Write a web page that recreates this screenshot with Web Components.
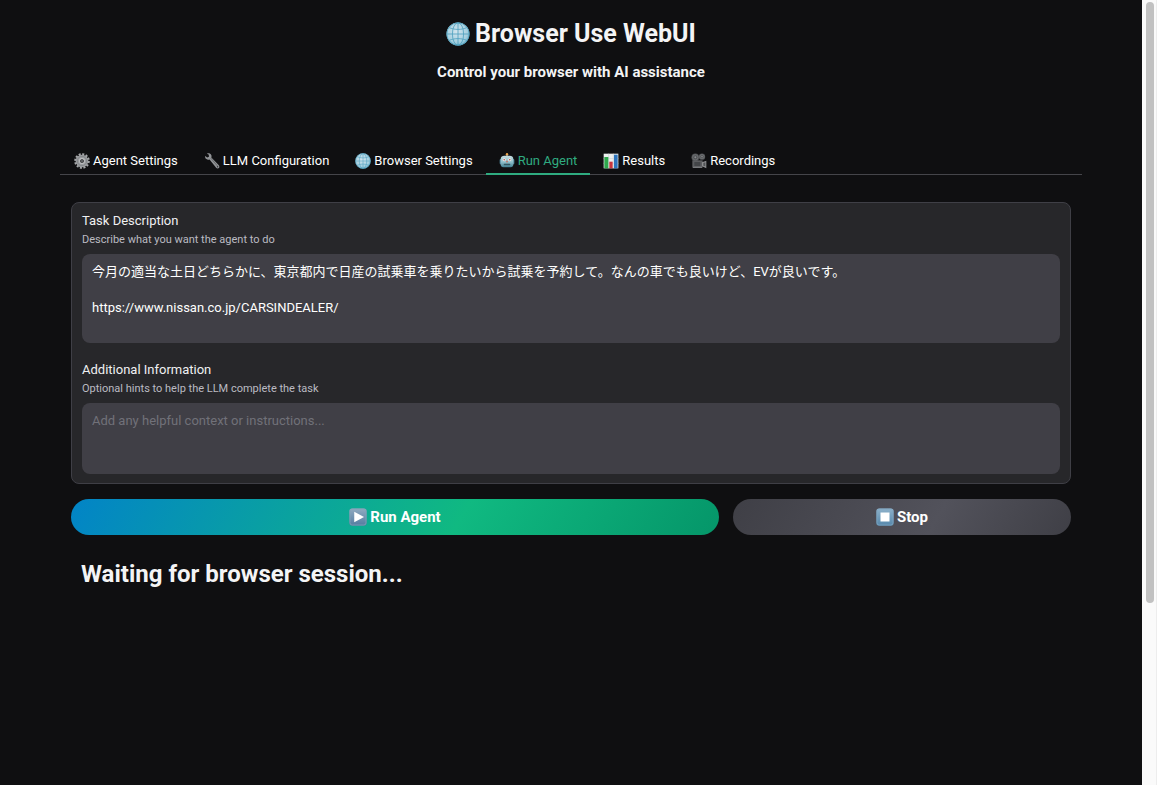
<!DOCTYPE html>
<html lang="en">
<head>
<meta charset="utf-8">
<meta name="viewport" content="width=device-width, initial-scale=1">
<title>Browser Use WebUI</title>
<style>
  html, body { margin: 0; background: #0f0f11; }
  body { font: 400 13px/18px Roboto, "Noto Sans CJK JP", sans-serif; color: #f4f4f5; }
</style>
</head>
<body>
<web-ui>
  <page-header slot="header" heading="Browser Use WebUI" tagline="Control your browser with AI assistance"></page-header>
  <tab-bar slot="tabs">
    <tab-item icon="gear">Agent Settings</tab-item>
    <tab-item icon="wrench">LLM Configuration</tab-item>
    <tab-item icon="globe">Browser Settings</tab-item>
    <tab-item icon="robot" selected>Run Agent</tab-item>
    <tab-item icon="chart">Results</tab-item>
    <tab-item icon="camera">Recordings</tab-item>
  </tab-bar>
  <field-group>
    <text-field label="Task Description" info="Describe what you want the agent to do" rows="4" value="今月の適当な土日どちらかに、東京都内で日産の試乗車を乗りたいから試乗を予約して。なんの車でも良いけど、EVが良いです。&#10;&#10;https://www.nissan.co.jp/CARSINDEALER/"></text-field>
    <text-field label="Additional Information" info="Optional hints to help the LLM complete the task" rows="3" placeholder="Add any helpful context or instructions..."></text-field>
  </field-group>
  <button-row>
    <action-button icon="play" variant="primary">Run Agent</action-button>
    <action-button icon="stop">Stop</action-button>
  </button-row>
  <status-view>Waiting for browser session...</status-view>
</web-ui>

<script>
const ICONS = {
  globe: `<defs><radialGradient id="g" cx=".45" cy=".4" r=".65"><stop offset="0" stop-color="#d3e5ee"/><stop offset=".7" stop-color="#a5cfdf"/><stop offset="1" stop-color="#68adc8"/></radialGradient></defs>
    <circle cx="12" cy="12" r="11.5" fill="url(#g)"/>
    <g fill="none" stroke="#4c9fbe" stroke-width=".8"><circle cx="12" cy="12" r="11.2"/><ellipse cx="12" cy="12" rx="5.6" ry="11.2"/><path d="M12 .8v22.4M.8 12h22.4M3.2 5.6c5 2.4 12.600 2.400 17.600 0M3.200 18.400c5-2.400 12.600-2.400 17.600 0"/></g>`,
  gear: `<g fill="none" stroke="#a6a8aa"><circle cx="12" cy="12" r="10" stroke-width="3.400" stroke-dasharray="3 2.236"/><circle cx="12" cy="12" r="6.500" stroke-width="6" stroke="#9a9c9f"/><circle cx="12" cy="12" r="3.600" stroke-width="1.600" stroke="#c0c2c4"/><circle cx="12" cy="12" r="7" stroke-width="1" stroke="#797c7f"/></g><circle cx="12" cy="12" r="2.400" fill="#5c5e61"/>`,
  wrench: `<path fill="#919396" d="M1.600 4.400 5 6.800 7.400 5.600 7.200 2.800 4.400.8C7-.1 10 .8 11 3.300c.5 1.300.4 2.400 0 3.400L22.300 18.500c1.700 2 .3 4.700-1.800 4.600-1 0-1.700-.4-2.300-1.100L8.300 9.800c-1 .4-2 .5-3.200.1C2.500 9.100 1.200 6.800 1.600 4.400z"/><path d="M10 7.500 20.600 20" stroke="#66686b" stroke-width="1.400"/><circle cx="20.300" cy="20.600" r="1" fill="#303236"/>`,
  robot: `<defs><linearGradient id="r" x2="0" y2="1"><stop stop-color="#c8dde1" offset="0"/><stop stop-color="#8fbfca" offset=".55"/><stop stop-color="#3e7d8f" offset="1"/></linearGradient></defs>
    <path d="M12 1.500v4" stroke="#899ca2" stroke-width="2"/><circle cx="12" cy="1.800" r="1.800" fill="#efa64b"/>
    <rect x="1" y="9" width="4" height="8" rx="1.500" fill="#52879b"/><rect x="19" y="9" width="4" height="8" rx="1.500" fill="#52879b"/>
    <path d="M2.500 17V9c0-3.500 2.500-5 5.500-5h8c3 0 5.500 1.500 5.500 5v8c0 3-1.500 4.500-4 4.500h-11c-2.500 0-4-1.500-4-4.500z" fill="url(#r)"/>
    <circle cx="7.800" cy="10" r="2.300" fill="#eef3f2"/><circle cx="16.200" cy="10" r="2.300" fill="#eef3f2"/><circle cx="7.800" cy="10" r="1.100" fill="#ad3b39"/><circle cx="16.200" cy="10" r="1.100" fill="#ad3b39"/><path d="M12 11l1.500 3h-3z" fill="#d65a45"/><rect x="7" y="16" width="10" height="2.500" rx="1.200" fill="#315762"/>`,
  chart: `<path fill="#edf0ef" d="M1 1h22v22H1z"/><path d="M1 8.500h22M1 15.500h22M8.500 1v22M15.500 1v22" stroke="#c9d0d3"/><path fill="#2ea84c" d="M2 6h6v17H2z"/><path fill="#c9363d" d="M9.500 13h5v10h-5z"/><path fill="#2e75bd" d="M16.500 2.500h5.500V23h-5.500z"/>`,
  camera: `<circle cx="6.500" cy="6.500" r="5.800" fill="#505255"/><circle cx="16.500" cy="5.500" r="4.800" fill="#505255"/><g fill="none" stroke="#747679" stroke-width="1.200"><circle cx="6.500" cy="6.500" r="4"/><circle cx="16.500" cy="5.500" r="3.200"/></g><circle cx="6.500" cy="6.500" r="1.500" fill="#87898c"/><circle cx="16.500" cy="5.500" r="1.200" fill="#87898c"/><path fill="#5c5d60" d="M2 11h15.500v11H2z"/><path fill="#434548" d="M5 13.500h9v6H5z"/><path fill="#8b8c8e" d="M16.500 14 23 11.500V23l-6.500-3z"/><path fill="#515356" d="M18.500 15 21.500 14v6l-3-1z"/><path d="M3 21.500h13.500" stroke="#838588" stroke-width="1.500"/>`,
  play: `<defs><linearGradient id="p" x2="0" y2="1"><stop stop-color="#91abc1"/><stop offset="1" stop-color="#547ca0"/></linearGradient></defs><rect x=".5" y=".5" width="23" height="23" rx="3.500" fill="url(#p)"/><rect x="1.300" y="1.300" width="21.400" height="21.400" rx="3" fill="none" stroke="#86a2ba"/><path d="M7 5 20 12 7 19z" fill="#fff"/>`,
  stop: `<defs><linearGradient id="s" x2="0" y2="1"><stop stop-color="#8db1ca"/><stop offset="1" stop-color="#5688ac"/></linearGradient></defs><rect x=".5" y=".5" width="23" height="23" rx="3.500" fill="url(#s)"/><rect x="1.300" y="1.300" width="21.400" height="21.400" rx="3" fill="none" stroke="#82a7c1"/><path d="M6 6h12v12H6z" fill="#fff"/>`
};

class Base extends HTMLElement {
  constructor() { super(); this.attachShadow({ mode: "open" }); }
  connectedCallback() { this.shadowRoot.innerHTML = this.render(); this.ready(); }
  ready() {}
  attr(name) { return this.getAttribute(name) || ""; }
}

customElements.define("ui-icon", class extends Base {
  render() {
    return `<style>:host{display:block;flex:none;width:16px;height:16px}svg{display:block;width:100%;height:100%}</style>
      <svg viewBox="0 0 24 24" aria-hidden="true">${ICONS[this.attr("name")]}</svg>`;
  }
});

customElements.define("scroll-rail", class extends Base {
  render() {
    return `<style>:host{display:block;box-sizing:border-box;background:#fafafa;border-right:1px solid #ededed;padding:2px 2px 2px 4px}
      div{width:8px;height:77%;border-radius:4px;background:#c1c1c1}</style><div></div>`;
  }
});

customElements.define("web-ui", class extends Base {
  render() {
    return `<style>
      :host{display:grid;grid-template-columns:minmax(0,1fr) 15px;min-height:100vh}
      .page{padding:20px 60px}
      main{display:flex;flex-direction:column;gap:15px;padding:27px 11px 0}
      </style>
      <div class="page"><slot name="header"></slot><slot name="tabs"></slot><main><slot></slot></main></div>
      <scroll-rail></scroll-rail>`;
  }
});

customElements.define("page-header", class extends Base {
  render() {
    return `<style>
      :host{display:block;text-align:center;margin-bottom:64px}
      h1{display:flex;justify-content:center;align-items:center;gap:5px;margin:0 0 14px;font-size:25px;line-height:28px;font-weight:700}
      h1 ui-icon{width:24px;height:24px}
      h2{margin:0;font-size:15px;line-height:20px;font-weight:700}
      </style><h1><ui-icon name="globe"></ui-icon>${this.attr("heading")}</h1><h2>${this.attr("tagline")}</h2>`;
  }
});

customElements.define("tab-bar", class extends Base {
  render() {
    return `<style>:host{display:flex;height:29px;box-sizing:border-box;padding-left:1px;border-bottom:1px solid #45454a}</style><slot></slot>`;
  }
});

customElements.define("tab-item", class extends Base {
  render() {
    return `<style>
      :host{display:block;height:29px}
      button{display:flex;align-items:center;gap:3px;height:29px;box-sizing:border-box;padding:2px 13px 0;border:0;border-bottom:2px solid transparent;background:none;font:inherit;color:#fff;white-space:nowrap;cursor:pointer}
      :host([selected]) button{color:#2fab80;border-color:#2fab80}
      </style><button type="button"><ui-icon name="${this.attr("icon")}"></ui-icon><slot></slot></button>`;
  }
});

customElements.define("field-group", class extends Base {
  render() {
    return `<style>:host{display:flex;flex-direction:column;gap:18px;padding:9px 10px;border:1px solid #3f3f46;border-radius:8px;background:#27272a}</style><slot></slot>`;
  }
});

customElements.define("text-field", class extends Base {
  render() {
    return `<style>
      :host{display:block}
      label{display:block;color:#f0f0f2}
      p{margin:2px 0 6px;font-size:11px;line-height:16px;color:#bbbbc2}
      textarea{display:block;width:100%;box-sizing:border-box;margin:0;padding:9px 10px 8px;border:0;border-radius:8px;background:#403f46;color:#fff;font:inherit;resize:none;overflow:hidden;outline:none}
      textarea::placeholder{color:#717179;opacity:1}
      </style>
      <label for="box">${this.attr("label")}</label><p id="info">${this.attr("info")}</p>
      <textarea id="box" aria-describedby="info" rows="${this.attr("rows")}" placeholder="${this.attr("placeholder")}"></textarea>`;
  }
  ready() { this.shadowRoot.querySelector("textarea").value = this.attr("value"); }
});

customElements.define("button-row", class extends Base {
  render() {
    return `<style>:host{display:grid;grid-template-columns:23fr 12fr;gap:14px}</style><slot></slot>`;
  }
});

customElements.define("action-button", class extends Base {
  render() {
    return `<style>
      :host{display:block}
      button{display:flex;align-items:center;justify-content:center;gap:3px;width:100%;height:36px;border:0;border-radius:18px;background:linear-gradient(120deg,#3f3f46 0%,#52525b 60%,#3f3f46 100%);color:#fff;font:inherit;font-size:15px;font-weight:700;cursor:pointer}
      :host([variant=primary]) button{background:linear-gradient(120deg,#0284c7 0%,#10b981 60%,#059669 100%)}
      ui-icon{width:18px;height:18px}
      </style><button type="button"><ui-icon name="${this.attr("icon")}"></ui-icon><slot></slot></button>`;
  }
});

customElements.define("status-view", class extends Base {
  render() {
    return `<style>:host{display:block;padding:10px}h1{margin:0;font-size:24px;line-height:28px;font-weight:700}</style><h1><slot></slot></h1>`;
  }
});
</script>
</body>
</html>
